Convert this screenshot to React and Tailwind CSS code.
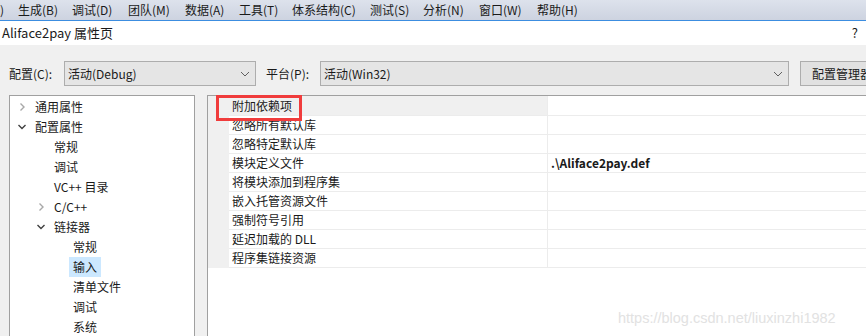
import React from "react";

const F = { fontFamily: '"Noto Sans CJK SC", "Microsoft YaHei", "Liberation Sans", sans-serif' };

function Chevron({ open }) {
  return open ? (
    <svg width="10" height="8" viewBox="0 0 10 8">
      <path d="M1.5 2 L5 5.5 L8.5 2" fill="none" stroke="#404040" strokeWidth="1.4" />
    </svg>
  ) : (
    <svg width="8" height="10" viewBox="0 0 8 10">
      <path d="M2.5 1.5 L6 5 L2.5 8.5" fill="none" stroke="#a8a8a8" strokeWidth="1.4" />
    </svg>
  );
}

function DropChevron() {
  return (
    <svg width="10" height="6" viewBox="0 0 10 6">
      <path d="M1 1 L5 5 L9 1" fill="none" stroke="#606060" strokeWidth="1" />
    </svg>
  );
}

const tree = [
  { l: 0, t: "通用属性", c: "closed" },
  { l: 0, t: "配置属性", c: "open" },
  { l: 1, t: "常规" },
  { l: 1, t: "调试" },
  { l: 1, t: "VC++ 目录" },
  { l: 1, t: "C/C++", c: "closed" },
  { l: 1, t: "链接器", c: "open" },
  { l: 2, t: "常规" },
  { l: 2, t: "输入", sel: true },
  { l: 2, t: "清单文件" },
  { l: 2, t: "调试" },
  { l: 2, t: "系统" },
];

const rows = [
  { n: "附加依赖项", sel: true },
  { n: "忽略所有默认库" },
  { n: "忽略特定默认库" },
  { n: "模块定义文件", v: ".\\Aliface2pay.def" },
  { n: "将模块添加到程序集" },
  { n: "嵌入托管资源文件" },
  { n: "强制符号引用" },
  { n: "延迟加载的 DLL" },
  { n: "程序集链接资源" },
];

export default function App() {
  return (
    <div className="relative w-[866px] h-[336px] overflow-hidden bg-[#f0f0f0] text-[12px] text-[#1a1a1a]" style={F}>
      {/* menu bar */}
      <div className="h-[21px] bg-gradient-to-b from-[#dde2ec] to-[#cdd3e0] border-b border-[#3c8de0]">
        <div className="flex h-[19px] items-center leading-none whitespace-nowrap">
          <span className="w-[18px] shrink-0">)</span>
          <span className="w-[54px] shrink-0">生成(B)</span>
          <span className="w-[56px] shrink-0">调试(D)</span>
          <span className="w-[57px] shrink-0">团队(M)</span>
          <span className="w-[54px] shrink-0">数据(A)</span>
          <span className="w-[53px] shrink-0">工具(T)</span>
          <span className="w-[78px] shrink-0">体系结构(C)</span>
          <span className="w-[53px] shrink-0">测试(S)</span>
          <span className="w-[56px] shrink-0">分析(N)</span>
          <span className="w-[58px] shrink-0">窗口(W)</span>
          <span className="w-[58px] shrink-0">帮助(H)</span>
        </div>
      </div>
      {/* title */}
      <div className="h-[24px] bg-white flex items-center justify-between pl-[2px] pr-[8px]">
        <span className="text-[13px]">Aliface2pay 属性页</span>
        <span className="text-[13px]">?</span>
      </div>
      {/* config row */}
      <div className="pt-[16px] pl-[9px] flex items-center">
        <span className="w-[55px] shrink-0 whitespace-nowrap">配置(C):</span>
        <div className="w-[192px] shrink-0 h-[25px] bg-[#e5e5e5] border border-[#adadad] flex items-center justify-between pl-[3px] pr-[5px]">
          <span>活动(Debug)</span>
          <DropChevron />
        </div>
        <span className="ml-[10px] w-[54px] shrink-0 whitespace-nowrap">平台(P):</span>
        <div className="w-[469px] shrink-0 h-[25px] bg-[#e5e5e5] border border-[#adadad] flex items-center justify-between pl-[3px] pr-[5px]">
          <span>活动(Win32)</span>
          <DropChevron />
        </div>
        <div className="ml-[11px] w-[90px] shrink-0 h-[25px] bg-[#e1e1e1] border border-[#adadad] flex items-center pl-[11px] whitespace-nowrap">
          配置管理器
        </div>
      </div>
      {/* panels */}
      <div className="mt-[9px] flex pl-[9px] gap-[12px] h-[260px]">
        <div className="w-[186px] shrink-0 bg-white border border-[#a0a0a0] border-b-0 pt-[1px]">
          {tree.map((r, i) => (
            <div key={i} className="h-[20px] flex items-center" style={{ paddingLeft: 4 + r.l * 19 }}>
              <span className="w-[16px] h-[20px] flex items-center justify-center">
                {r.c ? <Chevron open={r.c === "open"} /> : null}
              </span>
              <span className={"ml-[1px] px-[4px] h-[20px] flex items-center whitespace-nowrap " + (r.sel ? "bg-[#cce8ff]" : "")}>
                {r.t}
              </span>
            </div>
          ))}
        </div>
        <div className="relative w-[700px] shrink-0 bg-white border-l border-t border-[#a0a0a0]">
          {rows.map((r, i) => (
            <div key={i} className={"flex " + (i === 0 ? "h-[20px]" : "h-[19px]")}>
              <div className="w-[21px] shrink-0 bg-[#f0f0f0]" />
              <div className={"w-[319px] shrink-0 border-b border-r border-[#ececec] pl-[3px] flex items-center whitespace-nowrap " + (r.sel ? "bg-[#f0f0f0]" : "")}>
                {r.n}
              </div>
              <div className="flex-1 border-b border-[#ececec] pl-[3px] flex items-center font-bold whitespace-nowrap">
                {r.v || ""}
              </div>
            </div>
          ))}
          <div className="absolute left-[8px] top-[-1px] w-[86px] h-[26px] border-[3px] border-[#f03c3c]" />
        </div>
      </div>
      <div
        className="absolute left-[618px] top-[308px] text-[14.5px] text-[#e2e2e2] whitespace-nowrap"
        style={{ fontFamily: '"Liberation Sans", Arial, sans-serif' }}
      >
        https://blog.csdn.net/liuxinzhi1982
      </div>
    </div>
  );
}
